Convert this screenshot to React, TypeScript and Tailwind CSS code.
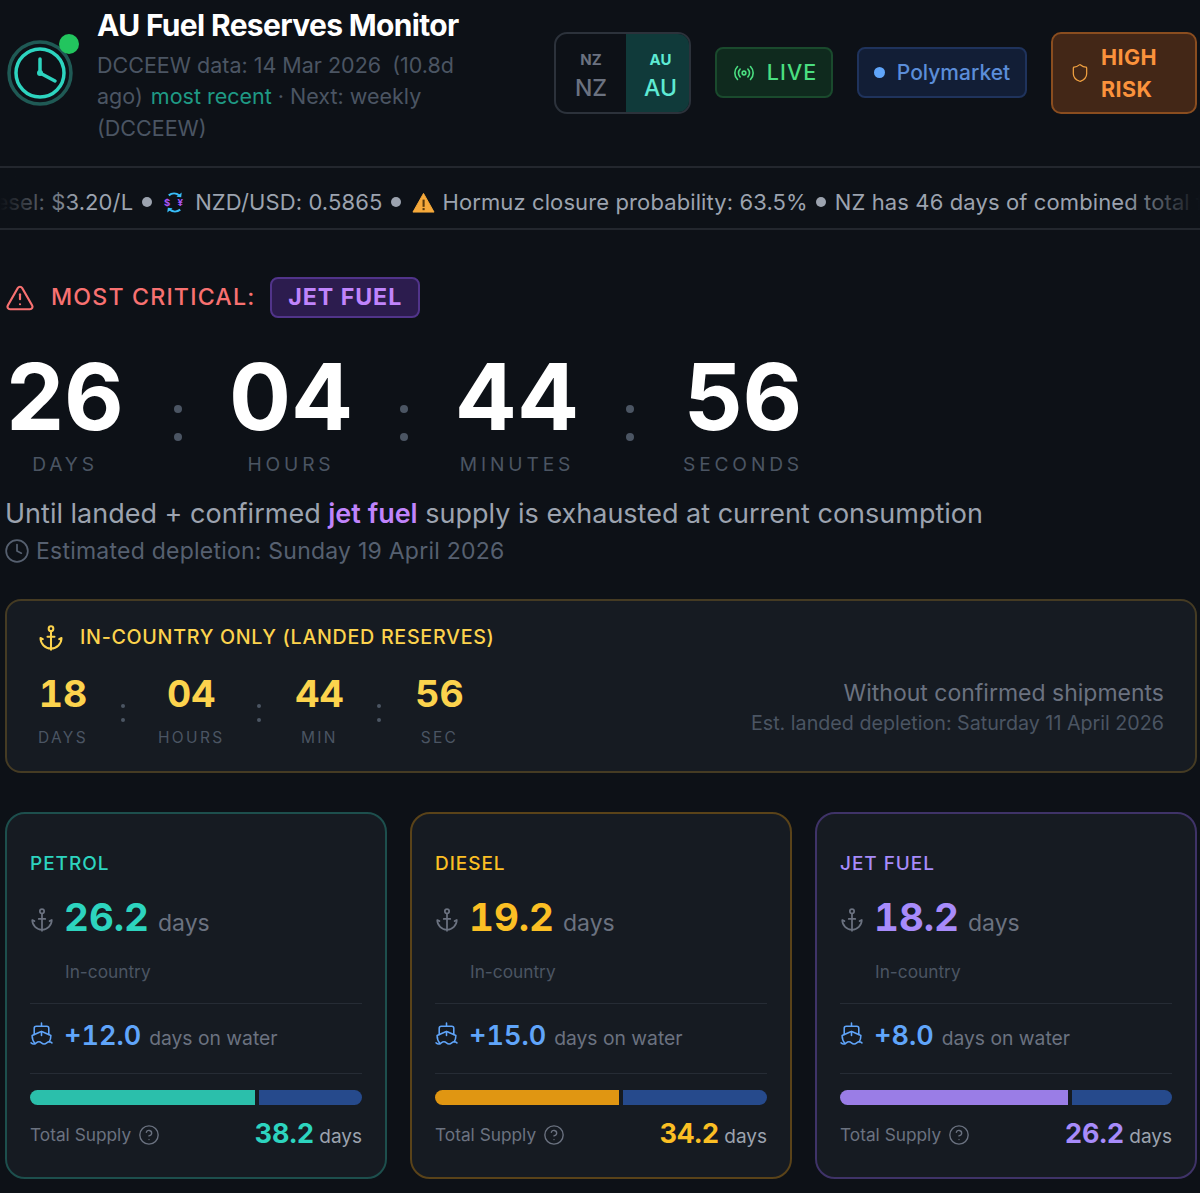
import { Anchor, CircleHelp, Clock, Radio, Shield, Ship, TriangleAlert } from "lucide-react";

const bigCountdown = [
  { value: "26", label: "DAYS" },
  { value: "04", label: "HOURS" },
  { value: "44", label: "MINUTES" },
  { value: "56", label: "SECONDS" },
];

const smallCountdown = [
  { value: "18", label: "DAYS" },
  { value: "04", label: "HOURS" },
  { value: "44", label: "MIN" },
  { value: "56", label: "SEC" },
];

const fuels = [
  {
    name: "PETROL",
    land: 26.2,
    water: 12,
    total: 38.2,
    border: "border-[#1d4f4d]",
    text: "text-[#2dd4bf]",
    bar: "bg-[#2bbfab]",
  },
  {
    name: "DIESEL",
    land: 19.2,
    water: 15,
    total: 34.2,
    border: "border-[#5a4319]",
    text: "text-[#fbbf24]",
    bar: "bg-[#e09612]",
  },
  {
    name: "JET FUEL",
    land: 18.2,
    water: 8,
    total: 26.2,
    border: "border-[#3f3368]",
    text: "text-[#a78bfa]",
    bar: "bg-[#9a7de6]",
  },
];

const LogoClock = () => (
  <div className="relative shrink-0 w-[66px] h-[66px]">
    <svg viewBox="0 0 66 66" className="w-full h-full" fill="none" strokeLinecap="round">
      <circle cx="33" cy="33" r="31" stroke="#1f5a55" strokeWidth="3.5" />
      <circle cx="33" cy="33" r="24" stroke="#2dd4bf" strokeWidth="3.5" />
      <path d="M33 19v14l15 8" stroke="#2dd4bf" strokeWidth="3.5" />
      <circle cx="33" cy="33" r="3" fill="#2dd4bf" />
    </svg>
    <span className="absolute right-[-6px] top-[-6px] w-5 h-5 rounded-full bg-[#22c55e]" />
  </div>
);

const ExchangeIcon = () => (
  <svg viewBox="0 0 24 24" className="w-[23px] h-[23px] shrink-0 ml-[3px] mr-[9px]" fill="none">
    <path d="M6 4.5a9 9 0 0 1 11 0" stroke="#38bdf8" strokeWidth="2.2" />
    <path d="M19.5 1.5l-.5 5-5-.5z" fill="#38bdf8" />
    <path d="M18 19.5a9 9 0 0 1-11 0" stroke="#38bdf8" strokeWidth="2.2" />
    <path d="M4.5 22.5l.5-5 5 .5z" fill="#38bdf8" />
    <text x="1" y="15.5" fontSize="10" fontWeight="700" fill="#a855f7" fontFamily="Inter, sans-serif">
      $
    </text>
    <text x="15" y="15.5" fontSize="10" fontWeight="700" fill="#a855f7" fontFamily="Inter, sans-serif">
      ¥
    </text>
  </svg>
);

const WarnIcon = () => (
  <svg viewBox="0 0 24 24" className="w-[23px] h-[23px] shrink-0 ml-[3px] mr-[7px]">
    <path d="M12 2.5 23 22H1z" fill="#f6a93b" stroke="#f6a93b" strokeWidth="1" strokeLinejoin="round" />
    <rect x="11" y="9" width="2.2" height="7.5" fill="#5a3a0c" />
    <rect x="11" y="17.8" width="2.2" height="2.2" fill="#5a3a0c" />
  </svg>
);

const Bullet = () => <span className="shrink-0 w-[10px] h-[10px] rounded-full bg-[#9ca3af] mx-[8.5px]" />;

const Colon = ({ big }: { big: boolean }) => (
  <div className={big ? "flex flex-col gap-[20px] w-[106px] items-center pt-[25px]" : "flex flex-col gap-[10px] w-[4px] items-center pt-[6px]"}>
    <span className={big ? "w-2 h-2 rounded-full bg-[#4b5563]" : "w-1 h-1 rounded-full bg-[#4b5563]"} />
    <span className={big ? "w-2 h-2 rounded-full bg-[#4b5563]" : "w-1 h-1 rounded-full bg-[#4b5563]"} />
  </div>
);

const FuelCard = ({ fuel }: { fuel: (typeof fuels)[number] }) => (
  <div className={`rounded-[20px] border-2 bg-[#161b22] h-[367px] px-[23px] pt-[38px] ${fuel.border}`}>
    <div className={`text-[19px] leading-[24px] tracking-[0.05em] font-medium ${fuel.text}`}>{fuel.name}</div>
    <div className="flex items-baseline mt-[17px] h-[48px]">
      <Anchor className="w-[26px] h-[26px] -ml-[1px] mr-[9px] mt-[6px] text-[#6b7280] self-center" strokeWidth={1.6} />
      <span className={`text-[38.5px] leading-[48px] font-bold tabular-nums ${fuel.text}`}>{fuel.land.toFixed(1)}</span>
      <span className="text-[23px] text-[#6b7280] ml-[9px]">days</span>
    </div>
    <div className="text-[17.3px] leading-[24px] text-[#4b5563] ml-[35px] mt-[19px]">In-country</div>
    <div className="border-t border-[#262c35] mt-[19px]" />
    <div className="flex items-baseline h-[69px] pt-[12px]">
      <Ship className="w-[25px] h-[25px] -ml-[1px] mr-[10px] mb-[22px] text-[#60a5fa] self-center" strokeWidth={1.5} />
      <span className="text-[27px] leading-[40px] font-semibold tabular-nums text-[#60a5fa]">+{fuel.water.toFixed(1)}</span>
      <span className="text-[19.3px] text-[#6b7280] ml-[8px]">days on water</span>
    </div>
    <div className="border-t border-[#262c35]" />
    <div className="flex gap-[4px] h-[15px] mt-[16px] rounded-full overflow-hidden">
      <div className={fuel.bar} style={{ flexGrow: fuel.land / fuel.total, flexBasis: 0 }} />
      <div className="bg-[#264a8c]" style={{ flexGrow: fuel.water / fuel.total, flexBasis: 0 }} />
    </div>
    <div className="flex items-center justify-between mt-[10px]">
      <div className="flex items-center gap-[7px] text-[17.3px] text-[#6b7280]">
        Total Supply
        <CircleHelp className="w-[22px] h-[22px] text-[#6b7280]" strokeWidth={1.5} />
      </div>
      <div className="flex items-baseline gap-[5px] mb-[2px]">
        <span className={`text-[27px] leading-[38px] font-bold tabular-nums ${fuel.text}`}>{fuel.total.toFixed(1)}</span>
        <span className="text-[19px] text-[#9ca3af]">days</span>
      </div>
    </div>
  </div>
);

export default function App() {
  return (
    <div className="w-[1200px] h-[1193px] overflow-hidden bg-[#0d1117] font-['Inter',sans-serif] text-white">
      {/* Header */}
      <header className="flex items-center h-[168px] border-b-2 border-[#23272e] pb-[21px] pl-[7px] pr-[3px]">
        <LogoClock />
        <div className="w-[372px] ml-[24px] mr-[85px] mt-[6px]">
          <h1 className="text-[30px] leading-[36px] font-bold tracking-[-0.022em]">AU Fuel Reserves Monitor</h1>
          <p className="text-[21.5px] leading-[31.5px] text-[#4b5563] mt-[7px]">
            DCCEEW data: 14 Mar 2026 <span className="ml-[5px]">(10.8d ago)</span> <span className="ml-[2px] text-[#1f9a85]">most recent</span> · Next: weekly (DCCEEW)
          </p>
        </div>
        <div className="flex w-[137px] h-[82px] rounded-[13px] border-2 border-[#2c323b] overflow-hidden text-center">
          <div className="flex-1 flex flex-col justify-center pt-[6px] text-[#6b7280]">
            <span className="text-[15px] leading-[24px] font-bold">NZ</span>
            <span className="text-[23px] leading-[32px] font-medium">NZ</span>
          </div>
          <div className="w-[63px] flex flex-col justify-center pt-[6px] pl-[6px] bg-[#103a3a] text-[#5eead4]">
            <span className="text-[15px] leading-[24px] font-bold">AU</span>
            <span className="text-[23px] leading-[32px] font-medium">AU</span>
          </div>
        </div>
        <div className="ml-[24px] flex items-center justify-center gap-[12px] pl-[2px] w-[118px] h-[51px] rounded-[8px] border-2 border-[#1a4a2d] bg-[#0f2a1e] text-[#4ade80] text-[21.5px] tracking-[0.05em] font-medium">
          <Radio className="w-[22px] h-[22px]" strokeWidth={1.75} />
          LIVE
        </div>
        <div className="ml-[24px] flex items-center justify-center gap-[12px] w-[170px] h-[51px] rounded-[8px] border-2 border-[#1f335c] bg-[#121e36] text-[#5b8dd9] text-[21px] font-medium">
          <span className="w-[11px] h-[11px] rounded-full bg-[#60a5fa]" />
          Polymarket
        </div>
        <div className="ml-[24px] flex items-center w-[146px] h-[82px] rounded-[10px] border-2 border-[#8a4d1f] bg-[#432717] text-[#fb923c] text-[21.5px] leading-[32px] font-bold tracking-[0.02em] pl-[17px]">
          <Shield className="w-[20px] h-[20px] mr-[11px] text-[#f0a040]" strokeWidth={1.5} />
          <span>
            HIGH
            <br />
            RISK
          </span>
        </div>
      </header>

      {/* Ticker */}
      <div className="relative h-[62px] border-b-2 border-[#23272e] overflow-hidden flex items-center pt-[8px]">
        <div className="flex items-center whitespace-nowrap text-[22px] tracking-[0.005em] text-[#9ca3af] -ml-[26px]">
          <span>Diesel: $3.20/L</span>
          <Bullet />
          <ExchangeIcon />
          <span>NZD/USD: 0.5865</span>
          <Bullet />
          <WarnIcon />
          <span>Hormuz closure probability: 63.5%</span>
          <Bullet />
          <span>NZ has 46 days of combined total fuel</span>
        </div>
        <div className="absolute inset-y-0 left-0 w-[80px] bg-gradient-to-r from-[#0d1117] to-transparent" />
        <div className="absolute inset-y-0 right-0 w-[80px] bg-gradient-to-l from-[#0d1117] to-transparent" />
      </div>

      <main className="pl-[5px] pr-[3px]">
        {/* Most critical */}
        <div className="flex items-center mt-[47px] h-[41px]">
          <TriangleAlert className="w-[30px] h-[30px] text-[#f87171]" strokeWidth={1.75} />
          <span className="ml-[16px] text-[23.2px] font-medium tracking-[0.05em] text-[#f87171]">MOST CRITICAL:</span>
          <span className="ml-[15px] flex items-center h-[41px] px-[16px] rounded-[8px] border-2 border-[#51348a] bg-[#2c1c4e] text-[23.2px] font-bold tracking-[0.04em] text-[#c084fc]">
            JET FUEL
          </span>
        </div>

        {/* Main countdown */}
        <div className="flex items-center mt-[24px]">
          {bigCountdown.map((c, i) => (
            <div key={c.label} className="flex items-center">
              <div className="w-[120px] flex flex-col items-center">
                <span className="text-[92px] leading-[110px] font-bold">{c.value}</span>
                <span className="text-[19.2px] leading-[28px] tracking-[0.2em] text-[#4b5563] -mt-[2px]">{c.label}</span>
              </div>
              {i < 3 && <Colon big />}
            </div>
          ))}
        </div>

        <p className="text-[27px] leading-[40px] text-[#9ca3af] mt-[16px]">
          Until landed + confirmed <span className="font-semibold text-[#c084fc]">jet fuel</span> supply is exhausted at current consumption
        </p>
        <div className="flex items-center gap-[6px] text-[23px] leading-[36px] text-[#566070] tracking-[0.01em] -mt-[1px]">
          <Clock className="w-[26px] h-[26px] -ml-[1px]" strokeWidth={1.6} />
          Estimated depletion: Sunday 19 April 2026
        </div>

        {/* In-country panel */}
        <div className="flex items-end justify-between h-[174px] mt-[30px] rounded-[16px] border-2 border-[#453b23] bg-[#161b22] pl-[31px] pr-[31px] pb-[21px]">
          <div>
            <div className="flex items-center gap-[15px] -ml-[1px] mb-[17px] text-[19.7px] font-medium tracking-[0.035em] text-[#fcd34d]">
              <Anchor className="w-[28px] h-[28px]" strokeWidth={1.75} />
              IN-COUNTRY ONLY (LANDED RESERVES)
            </div>
            <div className="flex items-center gap-[33px]">
              {smallCountdown.map((c, i) => (
                <div key={c.label} className="flex items-center gap-[33px]">
                  <div className="flex flex-col items-center min-w-[50px]">
                    <span className="text-[37.5px] leading-[48px] font-bold tabular-nums text-[#fcd34d]">{c.value}</span>
                    <span className="text-[15.5px] leading-[24px] tracking-[0.15em] text-[#4b5563] mt-[8px]">{c.label}</span>
                  </div>
                  {i < 3 && <Colon big={false} />}
                </div>
              ))}
            </div>
          </div>
          <div className="text-right pb-[13px]">
            <div className="text-[23px] leading-[32px] text-[#6b7280]">Without confirmed shipments</div>
            <div className="text-[19.7px] leading-[28px] text-[#4b5563]">Est. landed depletion: Saturday 11 April 2026</div>
          </div>
        </div>

        {/* Fuel cards */}
        <div className="grid grid-cols-3 gap-[23px] mt-[39px]">
          {fuels.map((f) => (
            <FuelCard key={f.name} fuel={f} />
          ))}
        </div>
      </main>
    </div>
  );
}
